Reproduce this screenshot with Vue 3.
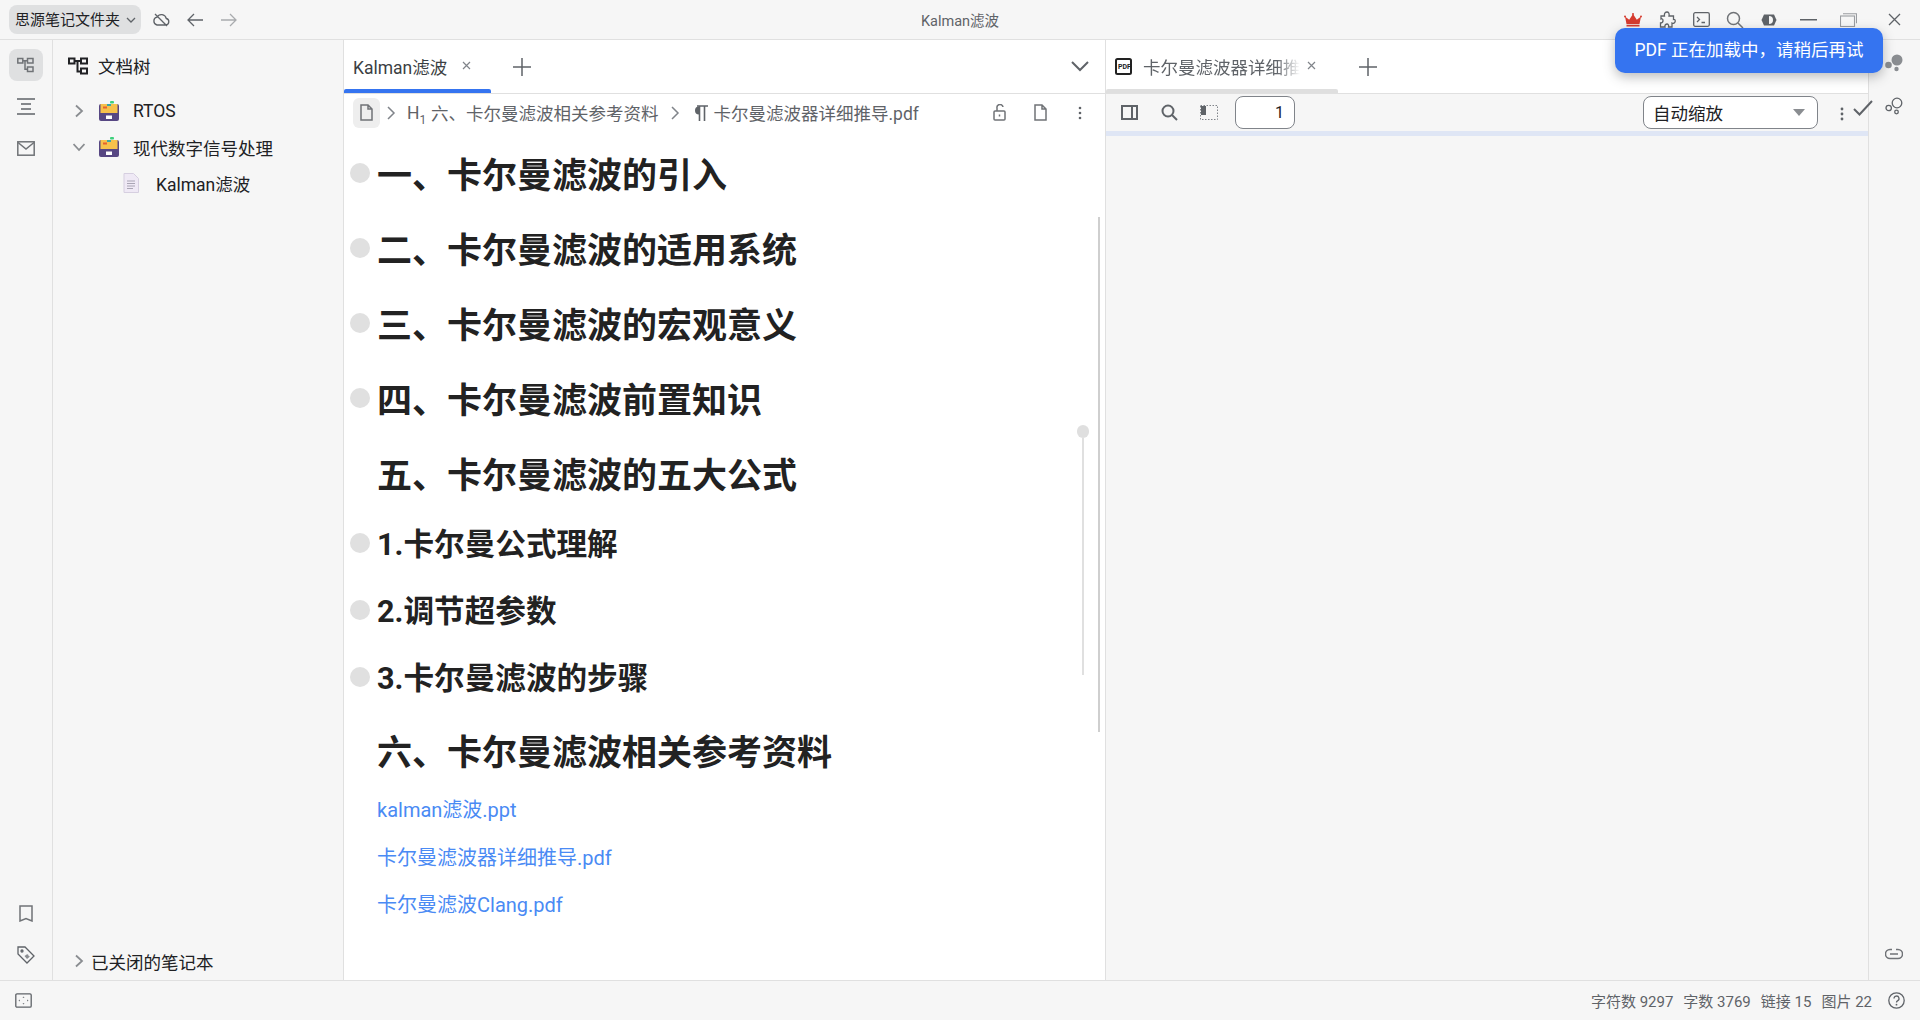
<script setup>
const blocks = [
  { text: '一、卡尔曼滤波的引入', cls: 'h1', bullet: true },
  { text: '二、卡尔曼滤波的适用系统', cls: 'h1 next', bullet: true },
  { text: '三、卡尔曼滤波的宏观意义', cls: 'h1 next', bullet: true },
  { text: '四、卡尔曼滤波前置知识', cls: 'h1 next', bullet: true },
  { text: '五、卡尔曼滤波的五大公式', cls: 'h1 next', bullet: false },
  { text: '1.卡尔曼公式理解', cls: 'h2 first-sub', bullet: true },
  { text: '2.调节超参数', cls: 'h2 next-sub', bullet: true },
  { text: '3.卡尔曼滤波的步骤', cls: 'h2 next-sub', bullet: true },
  { text: '六、卡尔曼滤波相关参考资料', cls: 'h1 last', bullet: false },
]
const links = ['kalman滤波.ppt', '卡尔曼滤波器详细推导.pdf', '卡尔曼滤波Clang.pdf']
const stats = ['字符数 9297', '字数 3769', '链接 15', '图片 22']
</script>

<template>
  <div class="app">
    <header class="topbar">
      <div class="top-left">
        <div class="workspace">思源笔记文件夹
          <svg width="12" height="12" viewBox="0 0 12 12" class="stroke"><path d="M2 4l4 4 4-4" /></svg>
        </div>
        <button class="ibtn"><svg width="18" height="16" viewBox="0 0 18 16" class="stroke"><path d="M5 13h8.500a3.300 3.300 0 0 0 .8-6.500A5 5 0 0 0 5 5.200 4 4 0 0 0 5 13zM3 2l12 12" /></svg></button>
        <button class="ibtn"><svg width="18" height="16" viewBox="0 0 18 16" class="stroke"><path d="M17 8H2M8 2L2 8l6 6" /></svg></button>
        <button class="ibtn dim"><svg width="18" height="16" viewBox="0 0 18 16" class="stroke"><path d="M1 8h15M10 2l6 6-6 6" /></svg></button>
      </div>
      <div class="title">Kalman滤波</div>
      <div class="top-right">
        <button class="ibtn"><svg width="18" height="14" viewBox="0 0 18 14"><path fill="#d63b2f" d="M1 3.500l4.200 3.300L9 1l3.800 5.800L17 3.500 15.500 11h-13zM2.500 11.800h13V13.500h-13z" /><circle cx="9" cy="1" r="1" fill="#d63b2f" /><circle cx="1" cy="3.500" r="1" fill="#d63b2f" /><circle cx="17" cy="3.500" r="1" fill="#d63b2f" /></svg></button>
        <button class="ibtn"><svg width="17" height="17" viewBox="0 0 17 17" class="stroke"><path d="M2 5h3.500C5 2 6.500 1 8 1s2.500 1.500 2 4h4.500v3.500C16 8 16.500 9.500 16 11s-2 1.500-3 1v4h-3.500c.5-2-.5-3-1.500-3s-2.500 1-2 3H1.500v-4C3 12 4 11 4 9.500S3 7.500 2 8z" /></svg></button>
        <button class="ibtn"><svg width="17" height="15" viewBox="0 0 17 15" class="stroke"><rect x=".7" y=".7" width="15.600" height="13.600" rx="1.500" /><path d="M4 5l2.500 2.500L4 10M8.500 10.500H12" /></svg></button>
        <button class="ibtn"><svg width="18" height="18" viewBox="0 0 18 18" class="stroke thick"><circle cx="7.500" cy="7.500" r="6" /><path d="M12 12l5 5" /></svg></button>
        <button class="ibtn ilast"><svg width="16" height="16" viewBox="0 0 16 16"><path fill="#5f6368" d="M3 2.500h10L15.500 8 13 13.500H3L.5 8z" /><path fill="#f6f6f6" d="M8 4a4 4 0 0 1 0 8z" /></svg></button>
        <button class="wbtn"><svg width="17" height="2" viewBox="0 0 17 2"><rect width="17" height="1.500" fill="#5f6368" /></svg></button>
        <button class="wbtn"><svg width="17" height="14" viewBox="0 0 17 14" class="stroke light"><rect x=".5" y="3" width="14" height="10.500" /><path d="M3 .7h13.500v9.500" /></svg></button>
        <button class="wbtn close"><svg width="13" height="13" viewBox="0 0 13 13" class="stroke"><path d="M1 1l11 11M12 1L1 12" /></svg></button>
      </div>
    </header>

    <main class="main">
      <aside class="dock dock-left">
        <button class="dbtn active"><svg width="17" height="16" viewBox="0 0 17 16" class="stroke thick"><rect x=".8" y="1.500" width="5" height="4.500" /><rect x="10.500" y="1.500" width="5.500" height="4.500" /><rect x="10.500" y="10" width="5.500" height="4.500" /><path d="M6 3.700h4.500M8 3.700v8.500h2.500" /></svg></button>
        <button class="dbtn"><svg width="18" height="17" viewBox="0 0 18 17" class="stroke"><path d="M0 1h18M4 6h10M4 11h10M0 16h18" /></svg></button>
        <button class="dbtn"><svg width="18" height="15" viewBox="0 0 18 15" class="stroke thick"><rect x=".8" y=".8" width="16.400" height="13.400" /><path d="M1 1.500l8 6.500 8-6.500" /></svg></button>
        <div class="dock-bottom">
          <button class="dbtn"><svg width="14" height="17" viewBox="0 0 14 17" class="stroke thick"><path d="M1 1h12v15l-6-2.500L1 16z" /></svg></button>
          <button class="dbtn"><svg width="18" height="18" viewBox="0 0 18 18" class="stroke"><path d="M1 1h7l9 9-7 7-9-9z" /><circle cx="5" cy="5" r="1" /><path fill="#8a8d91" stroke="none" d="M9 9c1-1.500 3-.5 2.500 1l1.500.5-3 2.500-2.500-3z" /></svg></button>
        </div>
      </aside>

      <aside class="tree">
        <div class="tree-head">
          <svg width="20" height="18" viewBox="0 0 20 18" class="stroke dark thick2"><rect x="1" y="1.500" width="5.500" height="5" /><rect x="13" y="1.500" width="6" height="5" /><rect x="13" y="11.500" width="6" height="5" /><path d="M6.500 4H13M9.500 4v10.500H13" /></svg>
          <span>文档树</span>
        </div>
        <div class="tree-row">
          <svg class="chev stroke" width="12" height="14" viewBox="0 0 12 14"><path d="M3 1.500L9 7l-6 5.500" /></svg>
          <svg class="drawer" width="20" height="20" viewBox="0 0 20 20"><rect x="0" y="3" width="20" height="17" rx="2" fill="#574783" /><rect x="1.500" y="3" width="17" height="9" fill="#f7c14c" /><rect x="4" y="5.500" width="4" height="2" fill="#e8622c" /><rect x="8" y="3" width="4" height="2" fill="#3aa6a6" /><rect x="11" y="0" width="4" height="2.500" rx="1" fill="#3ed07c" /><rect x="7" y="14.500" width="6" height="3.500" fill="#fff" /></svg>
          <span>RTOS</span>
        </div>
        <div class="tree-row">
          <svg class="chev stroke" width="12" height="14" viewBox="0 0 12 14"><path d="M.5 4L6 10l5.500-6" /></svg>
          <svg class="drawer" width="20" height="20" viewBox="0 0 20 20"><rect x="0" y="3" width="20" height="17" rx="2" fill="#574783" /><rect x="1.500" y="3" width="17" height="9" fill="#f7c14c" /><rect x="4" y="5.500" width="4" height="2" fill="#e8622c" /><rect x="8" y="3" width="4" height="2" fill="#3aa6a6" /><rect x="11" y="0" width="4" height="2.500" rx="1" fill="#3ed07c" /><rect x="7" y="14.500" width="6" height="3.500" fill="#fff" /></svg>
          <span>现代数字信号处理</span>
        </div>
        <div class="tree-row doc">
          <svg width="16" height="20" viewBox="0 0 16 20"><path d="M1 .5h9.500L15.500 5.500v14H1z" fill="#efe9f5" stroke="#d6cfe0" /><path d="M4 8h8M4 10.500h8M4 13h8M4 15.500h6" stroke="#a9a5b4" fill="none" /></svg>
          <span>Kalman滤波</span>
        </div>
        <div class="tree-row closed">
          <svg class="chev stroke" width="12" height="14" viewBox="0 0 12 14"><path d="M3 1.500L9 7l-6 5.500" /></svg>
          <span>已关闭的笔记本</span>
        </div>
      </aside>

      <section class="editor">
        <div class="tabbar">
          <div class="tab active-tab">
            <span class="tab-text">Kalman滤波</span>
            <svg class="tab-x" width="9" height="9" viewBox="0 0 9 9"><path d="M1 1l7 7M8 1L1 8" stroke="#80848a" fill="none" stroke-width="1.200" /></svg>
          </div>
          <svg class="plus" width="18" height="18" viewBox="0 0 18 18"><path d="M9 0v18M0 9h18" stroke="#5f6368" stroke-width="1.500" /></svg>
          <svg class="tab-chevron" width="18" height="11" viewBox="0 0 18 11"><path d="M1 1l8 8 8-8" stroke="#5f6368" stroke-width="2" fill="none" /></svg>
        </div>
        <div class="crumbs">
          <div class="chip"><svg width="13" height="17" viewBox="0 0 13 17" class="stroke thick"><path d="M1 1h7l4 4v11H1zM8 1v4h4" /></svg></div>
          <svg class="crumb-sep stroke" width="10" height="14" viewBox="0 0 10 14"><path d="M2 1l6 6-6 6" /></svg>
          <span class="h-mark">H<sub>1</sub></span>
          <span class="crumb-text">六、卡尔曼滤波相关参考资料</span>
          <svg class="crumb-sep sep2 stroke" width="10" height="14" viewBox="0 0 10 14"><path d="M2 1l6 6-6 6" /></svg>
          <svg class="para-icon" width="16" height="16" viewBox="0 0 16 16"><path d="M7 1.500a4 4 0 0 0 0 8z" fill="#5f6368" /><path d="M5 1h11M7.500 1v15M12.500 1v15" stroke="#5f6368" stroke-width="1.600" fill="none" /></svg>
          <span class="crumb-text">卡尔曼滤波器详细推导.pdf</span>
          <div class="crumb-actions">
            <button class="abtn"><svg width="14" height="17" viewBox="0 0 14 17" class="stroke thick"><rect x="1" y="7" width="11" height="9" rx="1" /><path d="M4 7V4a3 3 0 0 1 6-1" /><path d="M6.500 10.500v2" /></svg></button>
            <button class="abtn"><svg width="13" height="17" viewBox="0 0 13 17" class="stroke thick"><path d="M1 1h7l4 4v11H1zM8 1v4h4" /></svg></button>
            <button class="abtn"><svg width="4" height="14" viewBox="0 0 4 14" fill="#5f6368"><circle cx="2" cy="2" r="1.300" /><circle cx="2" cy="7" r="1.300" /><circle cx="2" cy="12" r="1.300" /></svg></button>
          </div>
        </div>
        <article class="doc-body">
          <div v-for="b in blocks" :key="b.text" class="block" :class="b.cls">
            <i v-if="b.bullet" class="bullet"></i>{{ b.text }}
          </div>
          <p v-for="(l, i) in links" :key="l" class="link" :class="{ 'first-link': i === 0 }">{{ l }}</p>
        </article>
        <i class="scroll-thin"></i>
        <i class="scroll-track"></i>
        <i class="scroll-handle"></i>
      </section>

      <section class="pdf">
        <div class="tabbar">
          <div class="tab pdf-tab">
            <svg width="17" height="17" viewBox="0 0 17 17"><rect x="1" y="1" width="15" height="15" rx="1.500" fill="#fff" stroke="#222" stroke-width="2" /></svg>
            <b class="pdf-mini">PDF</b>
            <span class="pdf-name">卡尔曼滤波器详细推导.pdf</span>
            <svg class="pdf-x" width="9" height="9" viewBox="0 0 9 9"><path d="M1 1l7 7M8 1L1 8" stroke="#80848a" fill="none" stroke-width="1.200" /></svg>
          </div>
          <svg class="plus pdf-plus" width="18" height="18" viewBox="0 0 18 18"><path d="M9 0v18M0 9h18" stroke="#5f6368" stroke-width="1.500" /></svg>
        </div>
        <div class="pdf-toolbar">
          <button class="tbtn"><svg width="17" height="15" viewBox="0 0 17 15" class="stroke thick2"><rect x="1" y="1" width="15" height="13" /><path d="M11 1v13" /></svg></button>
          <button class="tbtn"><svg width="17" height="17" viewBox="0 0 17 17" class="stroke thick2"><circle cx="7" cy="7" r="5.500" /><path d="M11 11l5 5" /></svg></button>
          <button class="tbtn"><svg width="18" height="15" viewBox="0 0 18 15"><rect x=".5" y=".5" width="17" height="14" fill="none" stroke="#80848a" stroke-dasharray="1.500 1.500" /><rect x="1" y="1" width="5" height="9" fill="#5f6368" /></svg></button>
          <div class="page-input">1</div>
          <div class="zoom-select"><span>自动缩放</span><i class="caret"></i></div>
          <svg class="tool-dots" width="4" height="14" viewBox="0 0 4 14" fill="#5f6368"><circle cx="2" cy="2" r="1.400" /><circle cx="2" cy="7" r="1.400" /><circle cx="2" cy="12" r="1.400" /></svg>
        </div>
        <div class="load-band"></div>
        <svg class="tool-check" width="20" height="16" viewBox="0 0 20 16"><path d="M1 9l5.500 5.500L19 1" stroke="#5f6368" stroke-width="2" fill="none" /></svg>
      </section>

      <aside class="dock dock-right">
        <button class="dbtn"><svg width="18" height="18" viewBox="0 0 18 18" fill="#8a8d91"><circle cx="12" cy="6" r="5.500" /><circle cx="3.500" cy="11" r="3.300" /><circle cx="11.500" cy="15" r="2.200" /></svg></button>
        <button class="dbtn"><svg width="18" height="18" viewBox="0 0 18 18" class="stroke"><circle cx="12" cy="6" r="4.800" /><circle cx="3.700" cy="11" r="2.700" /><circle cx="11.500" cy="15" r="1.800" /></svg></button>
        <div class="dock-bottom">
          <button class="dbtn"><svg width="18" height="12" viewBox="0 0 18 12" class="stroke thick"><path d="M7 1.500H5a4.500 4.500 0 0 0 0 9h8a4.500 4.500 0 0 0 0-9h-2M5 6h8" /></svg></button>
        </div>
      </aside>
    </main>

    <footer class="status">
      <svg width="17" height="15" viewBox="0 0 17 15"><rect x=".8" y=".8" width="15.400" height="13.400" rx="1.200" fill="none" stroke="#5f6368" stroke-width="1.300" /><path d="M8.500 3.500l1 1.300h-2zM8.500 11.500l1-1.300h-2zM3.500 7.500l1.300-1v2zM13.500 7.500l-1.300-1v2z" fill="#5f6368" /></svg>
      <div class="stats">
        <span v-for="s in stats" :key="s">{{ s }}</span>
      </div>
      <svg class="help" width="17" height="17" viewBox="0 0 17 17"><circle cx="8.500" cy="8.500" r="7.700" fill="none" stroke="#5f6368" stroke-width="1.300" /><path d="M6 6.500a2.500 2.500 0 1 1 3.500 2.300c-.7.300-1 .8-1 1.700" fill="none" stroke="#5f6368" stroke-width="1.300" /><circle cx="8.500" cy="12.700" r=".9" fill="#5f6368" /></svg>
    </footer>

    <div class="toast">PDF 正在加载中，请稍后再试</div>
  </div>
</template>

<style>
html, body { margin: 0; padding: 0; overflow: hidden; }
</style>

<style scoped>
.app {
  position: relative;
  width: 1920px;
  height: 1020px;
  display: flex;
  flex-direction: column;
  overflow: hidden;
  background: #f6f6f6;
  color: #202124;
  font-family: Roboto, "Noto Sans CJK SC", sans-serif;
  font-size: 17.5px;
}
button { border: 0; background: none; padding: 0; display: flex; align-items: center; justify-content: center; }
.stroke { fill: none; stroke: #5f6368; stroke-width: 1.300; }
.stroke.thick { stroke-width: 1.500; stroke: #707377; }
.stroke.thick2 { stroke-width: 2; }
.stroke.dark { stroke: #202124; }
.stroke.light { stroke: #9a9da1; stroke-width: 1.100; }

.topbar {
  flex: none;
  height: 40px;
  box-sizing: border-box;
  border-bottom: 1px solid #e0e0e0;
  display: grid;
  grid-template-columns: 1fr auto 1fr;
  align-items: center;
}
.top-left { display: flex; align-items: center; padding-left: 9px; }
.workspace {
  width: 132px;
  height: 29px;
  box-sizing: border-box;
  padding: 0 0 2px 6px;
  border-radius: 8px;
  background: #dfe0e1;
  font-size: 15px;
  display: flex;
  align-items: center;
  gap: 5px;
  white-space: nowrap;
}
.workspace svg { margin-top: 2px; }
.ibtn { width: 34px; height: 32px; }
.top-left .ibtn:first-of-type { margin-left: 3px; }
.dim { opacity: .5; }
.title { font-size: 14.500px; color: #5f6368; }
.top-right { display: flex; justify-content: flex-end; align-items: center; }
.ilast { margin-right: 2px; }
.wbtn { width: 40px; height: 32px; }
.wbtn.close { width: 52px; }

.main { flex: 1; display: flex; min-height: 0; }
.dock {
  flex: none;
  box-sizing: border-box;
  display: flex;
  flex-direction: column;
  align-items: center;
  gap: 9.500px;
}
.dock-left { width: 53px; border-right: 1px solid #e0e0e0; padding: 9px 1px 9px 0; }
.dock-right { width: 52px; border-left: 1px solid #e0e0e0; padding: 7px 2px 10px 0; gap: 11px; }
.dbtn { width: 34px; height: 32px; border-radius: 8px; flex: none; }
.dbtn.active { background: #dfe0e1; }
.dock-bottom { margin-top: auto; display: flex; flex-direction: column; gap: 10px; }

.tree {
  flex: none;
  width: 291px;
  box-sizing: border-box;
  border-right: 1px solid #e0e0e0;
  display: flex;
  flex-direction: column;
}
.tree-head { height: 53px; box-sizing: border-box; padding: 0 0 2px 15px; flex: none; display: flex; align-items: center; gap: 10px; }
.tree-row { height: 36px; flex: none; display: flex; align-items: center; padding-left: 20px; white-space: nowrap; }
.chev { flex: none; stroke: #8a8d91; stroke-width: 1.800; }
.drawer { margin-left: 14px; margin-right: 14px; flex: none; }
.tree-row.doc { padding-left: 70px; gap: 17px; }
.tree-row.closed { margin-top: auto; gap: 6px; padding-bottom: 1px; }

.editor {
  position: relative;
  flex: none;
  width: 762px;
  box-sizing: border-box;
  border-right: 1px solid #e0e0e0;
  background: #fff;
  display: flex;
  flex-direction: column;
}
.tabbar {
  flex: none;
  height: 54px;
  box-sizing: border-box;
  border-bottom: 1px solid #e0e0e0;
  display: flex;
  align-items: stretch;
  background: #fff;
}
.tab { position: relative; display: flex; align-items: center; box-sizing: border-box; }
.tab::after { content: ""; position: absolute; left: 0; right: 0; bottom: 0; height: 4px; border-radius: 2px 2px 0 0; }
.active-tab { width: 147px; padding-left: 9px; }
.active-tab::after { background: #3574f0; }
.tab-text { color: #3c3f43; }
.tab-x { margin-left: 15px; margin-top: -2px; }
.plus { align-self: center; margin-left: 22px; }
.tab-chevron { align-self: center; margin-left: auto; margin-right: 16px; }

.crumbs { flex: none; height: 37px; display: flex; align-items: center; color: #5f6368; white-space: nowrap; }
.chip { width: 27px; height: 30px; margin-left: 9px; background: #eeeeee; border-radius: 6px; display: flex; align-items: center; justify-content: center; }
.crumb-sep { margin-left: 6px; flex: none; stroke: #80848a; stroke-width: 1.500; }
.crumb-sep.sep2 { margin-left: 11px; }
.h-mark { margin-left: 11px; width: 24px; flex: none; font-size: 17.500px; }
.h-mark sub { font-size: 12px; line-height: 0; }
.para-icon { flex: none; margin-left: 12px; margin-right: 6px; }
.crumb-actions { margin-left: auto; margin-right: 5px; display: flex; }
.abtn { width: 40px; height: 30px; }

.doc-body { padding: 21px 0 0 33px; display: flex; flex-direction: column; color: #222; }
.block { position: relative; font-weight: 700; white-space: nowrap; }
.h1 { font-size: 35px; line-height: 49px; }
.h2 { font-size: 30.625px; line-height: 43px; }
.next { margin-top: 26px; }
.first-sub { margin-top: 22px; }
.next-sub { margin-top: 24px; }
.last { margin-top: 29px; }
.bullet {
  position: absolute;
  left: -27px;
  top: 50%;
  width: 20px;
  height: 20px;
  margin-top: -12px;
  border-radius: 50%;
  background: #e0e0e0;
}
.h1 .bullet { margin-top: -14px; }
.link { margin: 17.500px 0 0; color: #4a8af4; font-size: 20px; line-height: 30px; white-space: nowrap; }
.first-link { margin-top: 17px; }
.scroll-thin { position: absolute; left: 754px; top: 177px; width: 2px; height: 515px; background: #cfcfcf; }
.scroll-track { position: absolute; left: 738px; top: 398px; width: 2px; height: 237px; background: #e0e0e0; }
.scroll-handle { position: absolute; left: 733px; top: 385px; width: 12px; height: 13px; border-radius: 6px; background: #dfdfdf; }

.pdf { position: relative; flex: none; width: 762px; display: flex; flex-direction: column; }
.pdf-tab { width: 232px; padding-left: 9px; }
.pdf-tab::after { background: #dfdfdf; }
.pdf-mini { position: absolute; left: 12px; top: 23px; font-size: 7px; line-height: 8px; letter-spacing: 0; }
.pdf-name {
  width: 157px;
  margin-left: 11px;
  overflow: hidden;
  white-space: nowrap;
  color: #5f6368;
  -webkit-mask-image: linear-gradient(90deg, #000 85%, transparent);
  mask-image: linear-gradient(90deg, #000 85%, transparent);
}
.pdf-x { margin-left: 7px; margin-top: -2px; }
.pdf-plus { margin-left: 21px; }
.pdf-toolbar { flex: none; height: 37px; display: flex; align-items: center; padding-left: 3px; }
.tbtn { width: 40px; height: 32px; flex: none; }
.page-input {
  margin-left: 6px;
  width: 60px;
  height: 33px;
  box-sizing: border-box;
  border: 1px solid #80848a;
  border-radius: 8px;
  background: #fff;
  text-align: right;
  padding-right: 10px;
  line-height: 31px;
  font-size: 16px;
}
.zoom-select {
  margin-left: auto;
  width: 175px;
  height: 33px;
  box-sizing: border-box;
  border: 1px solid #80848a;
  border-radius: 8px;
  background: #fff;
  display: flex;
  align-items: center;
  justify-content: space-between;
  padding: 0 12px 0 9px;
}
.caret { width: 0; height: 0; border: 6px solid transparent; border-top: 7px solid #8a8d91; border-bottom: 0; }
.tool-dots { margin: 2px 24px 0 22px; flex: none; }
.load-band { flex: none; height: 5px; background: #dfe6f5; }
.tool-check { position: absolute; left: 747px; top: 60px; }

.status {
  flex: none;
  height: 40px;
  box-sizing: border-box;
  border-top: 1px solid #e0e0e0;
  display: flex;
  align-items: center;
  padding: 0 15px;
  color: #5f6368;
}
.stats { margin-left: auto; display: flex; gap: 10px; font-size: 15px; white-space: nowrap; }
.help { margin-left: 16px; }

.toast {
  position: absolute;
  left: 1615px;
  top: 28px;
  width: 268px;
  height: 45px;
  border-radius: 10px;
  background: #3574f0;
  color: #fff;
  text-align: center;
  line-height: 45px;
  white-space: nowrap;
  box-shadow: 0 4px 12px rgba(60, 64, 67, .35);
}
</style>
